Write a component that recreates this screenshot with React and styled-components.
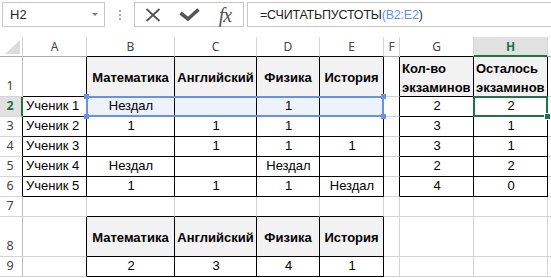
import React from "react";
import styled, { createGlobalStyle } from "styled-components";

const GlobalStyle = createGlobalStyle`
  html, body {
    margin: 0;
    padding: 0;
    background: #fff;
  }
  body {
    width: 551px;
    height: 278px;
    overflow: hidden;
    font-family: "Liberation Sans", Arial, sans-serif;
  }
`;

const GREEN = "#217346";
const BLUE = "#6692e8";
const GRID = "#d4d4d4";

// столбец I виден лишь на 3px, буква в него не помещается
const LETTERS = ["A", "B", "C", "D", "E", "F", "G", "H", ""];

// значения ячеек A..I по строкам 1..9
const DATA = [
  ["", "Математика", "Английский", "Физика", "История", "", "Кол-во экзаминов", "Осталось экзаминов", ""],
  ["Ученик 1", "Нездал", "", "1", "", "", "2", "2", ""],
  ["Ученик 2", "1", "1", "1", "", "", "3", "1", ""],
  ["Ученик 3", "", "1", "1", "1", "", "3", "1", ""],
  ["Ученик 4", "Нездал", "", "Нездал", "", "", "2", "2", ""],
  ["Ученик 5", "1", "1", "1", "Нездал", "", "4", "0", ""],
  ["", "", "", "", "", "", "", "", ""],
  ["", "Математика", "Английский", "Физика", "История", "", "", "", ""],
  ["", "2", "3", "4", "1", "", "", "", ""],
];

// какие ячейки обведены черной рамкой
const inTable = (r, c) =>
  (r >= 1 && r <= 6 && c >= 1 && c <= 4) ||
  (r >= 2 && r <= 6 && c === 0) ||
  (r >= 1 && r <= 6 && (c === 6 || c === 7)) ||
  (r >= 8 && r <= 9 && c >= 1 && c <= 4);

const isHeader = (r, c) =>
  ((r === 1 || r === 8) && c >= 1 && c <= 4) || (r === 1 && (c === 6 || c === 7));

const Page = styled.div`
  width: 551px;
  height: 278px;
  overflow: hidden;
  background: #fff;
`;

const Toolbar = styled.div`
  height: 37px;
  box-sizing: border-box;
  display: flex;
  align-items: flex-start;
  padding: 2px 0 0 2px;
`;

const NameBox = styled.div`
  box-sizing: border-box;
  width: 103px;
  height: 25px;
  border: 1px solid #c6c6c6;
  display: flex;
  align-items: center;
  justify-content: space-between;
  padding: 0 6px 0 7px;
  font-size: 13px;
  color: #222;
`;

const Caret = styled.span`
  width: 0;
  height: 0;
  border-left: 3px solid transparent;
  border-right: 3px solid transparent;
  border-top: 3px solid #7a7a7a;
`;

const Grip = styled.div`
  width: 29px;
  height: 25px;
  display: flex;
  flex-direction: column;
  align-items: center;
  justify-content: center;
  gap: 2px;
  span {
    width: 2px;
    height: 2px;
    background: #a6a6a6;
  }
`;

const FxButtons = styled.div`
  box-sizing: border-box;
  width: 110px;
  height: 25px;
  border: 1px solid #c6c6c6;
  display: flex;
  margin-right: 3px;
`;

const FxSlot = styled.div`
  flex: 1;
  display: flex;
  align-items: center;
  justify-content: center;
  color: #555;
`;

const FxText = styled.span`
  font-family: "Liberation Serif", "Times New Roman", serif;
  font-style: italic;
  font-size: 20px;
  line-height: 20px;
  color: #555;
  letter-spacing: -1px;
`;

const FormulaBox = styled.div`
  flex: 1;
  box-sizing: border-box;
  height: 25px;
  border: 1px solid #c6c6c6;
  border-right: none;
  display: flex;
  align-items: center;
  padding-left: 12px;
  font-size: 12.5px;
  letter-spacing: -0.2px;
  color: #222;
  white-space: nowrap;
`;

const Ref = styled.span`
  color: ${(p) => (p.$dark ? "#333" : BLUE)};
`;

const Sheet = styled.div`
  display: grid;
  grid-template-columns: 23px 64px 88px 82px 63px 64px 16px 74px 74px 40px;
  grid-template-rows: 20px 40px repeat(6, 20px) 40px 20px 20px;
`;

const Corner = styled.div`
  grid-row: 1;
  grid-column: 1;
  box-sizing: border-box;
  border-right: 1px solid #d5d5d5;
  border-bottom: 1px solid #ababab;
  display: flex;
  align-items: flex-end;
  justify-content: flex-end;
  padding: 0 2px 2px 0;
`;

const ColHead = styled.div`
  grid-row: 1;
  grid-column: ${(p) => p.$c};
  box-sizing: border-box;
  border-right: 1px solid #d5d5d5;
  border-bottom: 1px solid ${(p) => (p.$sel ? GREEN : p.$black ? "#000" : "#ababab")};
  box-shadow: ${(p) => (p.$sel ? `inset 0 -1px 0 ${GREEN}` : "none")};
  background: ${(p) => (p.$sel ? "#e1e1e1" : "#fff")};
  color: ${(p) => (p.$sel ? GREEN : "#444")};
  font-family: "Noto Sans", "Liberation Sans", sans-serif;
  font-weight: ${(p) => (p.$sel ? 700 : 400)};
  font-size: 12px;
  display: flex;
  align-items: center;
  justify-content: center;
  overflow: hidden;
`;

const RowHead = styled.div`
  grid-column: 1;
  grid-row: ${(p) => p.$r};
  box-sizing: border-box;
  border-right: 1px solid ${(p) => (p.$sel ? GREEN : p.$black ? "#000" : "#bdbdbd")};
  border-bottom: 1px solid #d5d5d5;
  box-shadow: ${(p) => (p.$sel ? `inset -1px 0 0 ${GREEN}` : "none")};
  background: ${(p) => (p.$sel ? "#e1e1e1" : "#fff")};
  color: ${(p) => (p.$sel ? GREEN : "#444")};
  font-family: "Noto Sans", "Liberation Sans", sans-serif;
  font-weight: ${(p) => (p.$sel ? 700 : 400)};
  font-size: 12.5px;
  line-height: 16px;
  display: flex;
  align-items: flex-end;
  justify-content: center;
  padding: 0 2px 2px 0;
`;

const Cell = styled.div`
  grid-row: ${(p) => p.$r};
  grid-column: ${(p) => p.$c};
  box-sizing: border-box;
  min-width: 0;
  border-right: 1px solid ${(p) => (p.$rb ? "#000" : GRID)};
  border-bottom: 1px solid ${(p) => (p.$bb ? "#000" : GRID)};
  background: ${(p) => p.$bg || "#fff"};
  font-size: 13px;
  font-weight: ${(p) => (p.$bold ? 700 : 400)};
  color: #000;
  display: flex;
  align-items: ${(p) => (p.$head ? "center" : "flex-end")};
  justify-content: ${(p) => (p.$left ? "flex-start" : "center")};
  padding: ${(p) => (p.$head ? "3px 2px 0" : "0 2px 2px 3px")};
  line-height: 16px;
  white-space: nowrap;
  overflow: hidden;
`;

const WrapCell = styled(Cell)`
  display: block;
  white-space: normal;
  line-height: 19px;
  padding: 2px 2px 0;
`;

const RangeBox = styled.div`
  grid-row: 3;
  grid-column: 3 / 7;
  margin: -1px 0 0 -1px;
  border: 2px solid ${BLUE};
  position: relative;
  z-index: 2;
  pointer-events: none;
`;

const Handle = styled.span`
  position: absolute;
  width: 5px;
  height: 5px;
  background: ${BLUE};
  ${(p) => (p.$top ? "top: -4px;" : "bottom: -4px;")}
  ${(p) => (p.$left ? "left: -4px;" : "right: -4px;")}
`;

const ActiveBox = styled.div`
  grid-row: 3;
  grid-column: 9;
  margin: -1px 0 0 -1px;
  border: 2px solid ${GREEN};
  position: relative;
  z-index: 3;
  pointer-events: none;
`;

const FillHandle = styled.span`
  position: absolute;
  right: -5px;
  bottom: -5px;
  width: 5px;
  height: 5px;
  background: ${GREEN};
  border: 1px solid #fff;
`;

const CrossIcon = () => (
  <svg width="16" height="14" viewBox="0 0 16 14">
    <path d="M1.5 1 L14.5 13 M14.5 1 L1.5 13" stroke="#555" strokeWidth="1.8" fill="none" />
  </svg>
);

const CheckIcon = () => (
  <svg width="21" height="13" viewBox="0 0 21 13">
    <path d="M1.5 5 L9 11 L19.5 1.5" stroke="#555" strokeWidth="3.6" fill="none" strokeLinejoin="miter" />
  </svg>
);

const CornerMark = () => (
  <svg width="15" height="14" viewBox="0 0 15 14">
    <polygon points="0,14 15,14 15,0" fill="#dcdcdc" />
  </svg>
);

const App = () => {
  const cells = [];

  DATA.forEach((row, ri) => {
    const r = ri + 1;
    row.forEach((value, c) => {
      const rb = inTable(r, c) || inTable(r, c + 1);
      const bb = inTable(r, c) || inTable(r + 1, c);
      const head = isHeader(r, c);
      const wrap = r === 1 && (c === 6 || c === 7);
      const bg = head ? "#f2f2f2" : r === 2 && c >= 1 && c <= 4 ? "#edf2fc" : null;
      const props = {
        key: `${r}-${c}`,
        $r: r + 1,
        $c: c + 2,
        $rb: rb,
        $bb: bb,
        $bg: bg,
        $bold: head,
        $head: head,
        $left: c === 0 || wrap,
      };
      cells.push(wrap ? <WrapCell {...props}>{value}</WrapCell> : <Cell {...props}>{value}</Cell>);
    });
  });

  return (
    <Page>
      <GlobalStyle />
      <Toolbar>
        <NameBox>
          H2
          <Caret />
        </NameBox>
        <Grip>
          <span />
          <span />
          <span />
        </Grip>
        <FxButtons>
          <FxSlot>
            <CrossIcon />
          </FxSlot>
          <FxSlot>
            <CheckIcon />
          </FxSlot>
          <FxSlot>
            <FxText>fx</FxText>
          </FxSlot>
        </FxButtons>
        <FormulaBox>
          =СЧИТАТЬПУСТОТЫ<Ref>(B2:E2</Ref>
          <Ref $dark>)</Ref>
        </FormulaBox>
      </Toolbar>

      <Sheet>
        <Corner>
          <CornerMark />
        </Corner>
        {LETTERS.map((l, i) => (
          <ColHead key={i} $c={i + 2} $sel={l === "H"} $black={inTable(1, i)}>
            {l}
          </ColHead>
        ))}
        {DATA.map((_, ri) => (
          <RowHead key={ri} $r={ri + 2} $sel={ri + 1 === 2} $black={inTable(ri + 1, 0)}>
            {ri + 1}
          </RowHead>
        ))}
        {cells}
        <RangeBox>
          <Handle $top $left />
          <Handle $top />
          <Handle $left />
          <Handle />
        </RangeBox>
        <ActiveBox>
          <FillHandle />
        </ActiveBox>
      </Sheet>
    </Page>
  );
};

export default App;
